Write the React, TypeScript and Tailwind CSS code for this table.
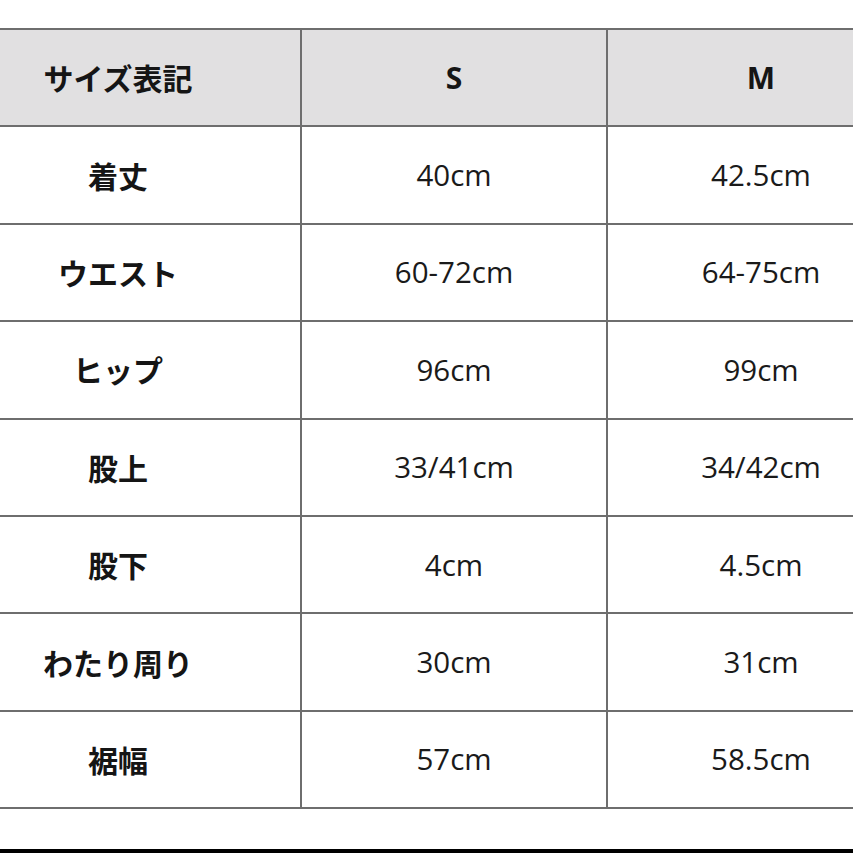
const rows: [string, string, string][] = [
  ["着丈", "40cm", "42.5cm"],
  ["ウエスト", "60-72cm", "64-75cm"],
  ["ヒップ", "96cm", "99cm"],
  ["股上", "33/41cm", "34/42cm"],
  ["股下", "4cm", "4.5cm"],
  ["わたり周り", "30cm", "31cm"],
  ["裾幅", "57cm", "58.5cm"],
];

const jp = "font-['Noto_Sans_CJK_JP','Noto_Sans',sans-serif]";
const num = "font-['Open_Sans','Noto_Sans_CJK_JP',sans-serif]";

const App = () => {
  return (
    <div className="w-[853px] h-[853px] bg-white overflow-hidden flex flex-col">
      <div className="mt-[28px] w-[914px] grid grid-cols-[302px_306px_306px] border-t-2 border-[#6e6e6e]">
        <div className={`h-[97.4px] bg-[#e1e0e1] border-b-2 border-r-2 border-[#6e6e6e] flex items-center justify-center pr-[64px] text-[30px] font-bold text-[#151515] ${jp}`}>
          サイズ表記
        </div>
        <div className={`h-[97.4px] bg-[#e1e0e1] border-b-2 border-r-2 border-[#6e6e6e] flex items-center justify-center text-[30px] font-bold text-[#151515] ${num}`}>
          S
        </div>
        <div className={`h-[97.4px] bg-[#e1e0e1] border-b-2 border-[#6e6e6e] flex items-center justify-center text-[30px] font-bold text-[#151515] ${num}`}>
          M
        </div>

        {rows.map(([label, s, m]) => (
          <div key={label} className="contents">
            <div className={`h-[97.4px] border-b-2 border-r-2 border-[#6e6e6e] flex items-center justify-center pr-[64px] text-[30px] font-bold text-[#151515] ${jp}`}>
              {label}
            </div>
            <div className={`h-[97.4px] border-b-2 border-r-2 border-[#6e6e6e] flex items-center justify-center text-[29.5px] text-[#1a1a1a] ${num}`}>
              {s}
            </div>
            <div className={`h-[97.4px] border-b-2 border-[#6e6e6e] flex items-center justify-center text-[29.5px] text-[#1a1a1a] ${num}`}>
              {m}
            </div>
          </div>
        ))}
      </div>
      <div className="mt-auto h-[4px] w-full bg-black" />
    </div>
  );
};

export default App;
